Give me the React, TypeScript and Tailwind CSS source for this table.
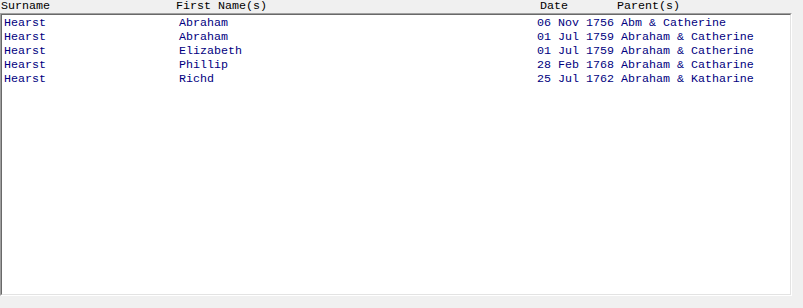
const rows = [
  { surname: "Hearst", first: "Abraham", date: "06 Nov 1756", parents: "Abm & Catherine" },
  { surname: "Hearst", first: "Abraham", date: "01 Jul 1759", parents: "Abraham & Catherine" },
  { surname: "Hearst", first: "Elizabeth", date: "01 Jul 1759", parents: "Abraham & Catherine" },
  { surname: "Hearst", first: "Phillip", date: "28 Feb 1768", parents: "Abraham & Catharine" },
  { surname: "Hearst", first: "Richd", date: "25 Jul 1762", parents: "Abraham & Katharine" },
];

const mono = { fontFamily: '"Courier New", "Liberation Mono", monospace' };

export default function App() {
  return (
    <div className="flex h-[308px] w-[803px] flex-col bg-[#f0f0f0] text-[11.67px]" style={mono}>
      <div className="flex h-[13px] leading-[12px] text-black whitespace-pre">
        <span className="w-[176px] pl-[1px]">Surname</span>
        <span className="w-[364px]">First Name(s)</span>
        <span className="w-[77px]">Date</span>
        <span>Parent(s)</span>
      </div>
      <div className="mr-[11px] h-[283px] border-t border-l border-r border-b border-t-[#a0a0a0] border-l-[#a0a0a0] border-r-white border-b-white">
        <div className="h-full border border-t-[#696969] border-l-[#696969] border-r-[#e3e3e3] border-b-[#e3e3e3] bg-white pt-[1px] pl-[2px]">
          {rows.map((r, i) => (
            <div key={i} className="flex h-[14px] leading-[14px] text-[#000080] whitespace-pre">
              <span className="w-[175px]">{r.surname}</span>
              <span className="w-[358px]">{r.first}</span>
              <span>{r.date} {r.parents}</span>
            </div>
          ))}
        </div>
      </div>
    </div>
  );
}
